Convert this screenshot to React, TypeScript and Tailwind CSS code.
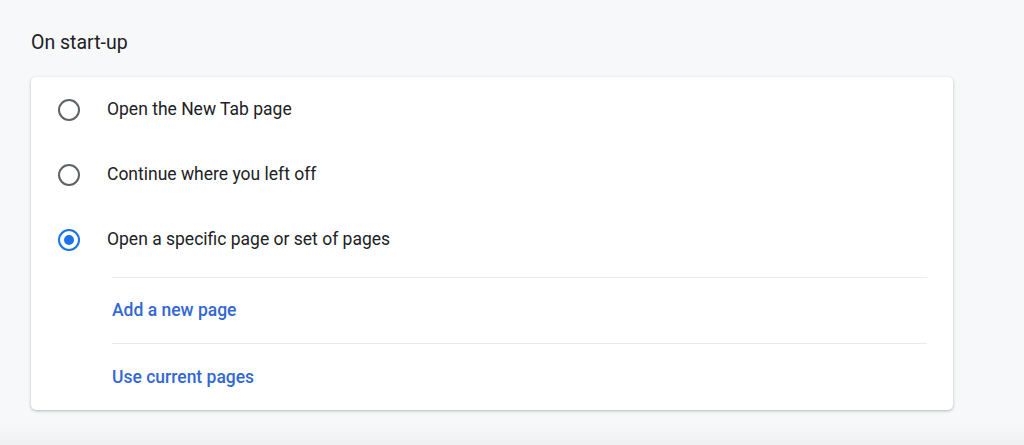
import { useState } from "react"

const options = [
  "Open the New Tab page",
  "Continue where you left off",
  "Open a specific page or set of pages",
]

function Radio({ checked }: { checked: boolean }) {
  return (
    <div
      className={
        checked
          ? "flex h-[22px] w-[22px] items-center justify-center rounded-full border-[2.5px] border-[#1a73e8]"
          : "flex h-[22px] w-[22px] items-center justify-center rounded-full border-[2.5px] border-[#5f6368]"
      }
    >
      {checked && <div className="h-[10px] w-[10px] rounded-full bg-[#1a73e8]" />}
    </div>
  )
}

export default function App() {
  const [selected, setSelected] = useState(2)

  return (
    <div className="h-[445px] w-full bg-[linear-gradient(to_bottom,#f7f8fa_0%,#f7f8fa_95%,#eff0f2_100%)] pl-[31px] pt-[31px] font-['Roboto',sans-serif]">
      <h2 className="text-[19.5px] leading-[24px] text-[#202124]">On start-up</h2>
      <div className="mt-[22px] w-[922px] rounded-[5px] bg-white shadow-[0_1px_3px_rgba(60,64,67,0.35)]">
        {options.map((label, i) => (
          <div
            key={label}
            className="flex h-[65px] cursor-pointer items-center"
            onClick={() => setSelected(i)}
          >
            <div className="flex w-[76px] justify-center">
              <Radio checked={selected === i} />
            </div>
            <span className="text-[17.5px] text-[#202124]">{label}</span>
          </div>
        ))}
        <div className="ml-[81px] mr-[26px] mt-[5px]">
          <div className="flex h-[66px] items-center border-t border-[#e8eaed] text-[17.5px] font-medium text-[#3367d6]">
            Add a new page
          </div>
          <div className="flex h-[67px] items-center border-t border-[#e8eaed] text-[17.5px] font-medium text-[#3367d6]">
            Use current pages
          </div>
        </div>
      </div>
    </div>
  )
}
